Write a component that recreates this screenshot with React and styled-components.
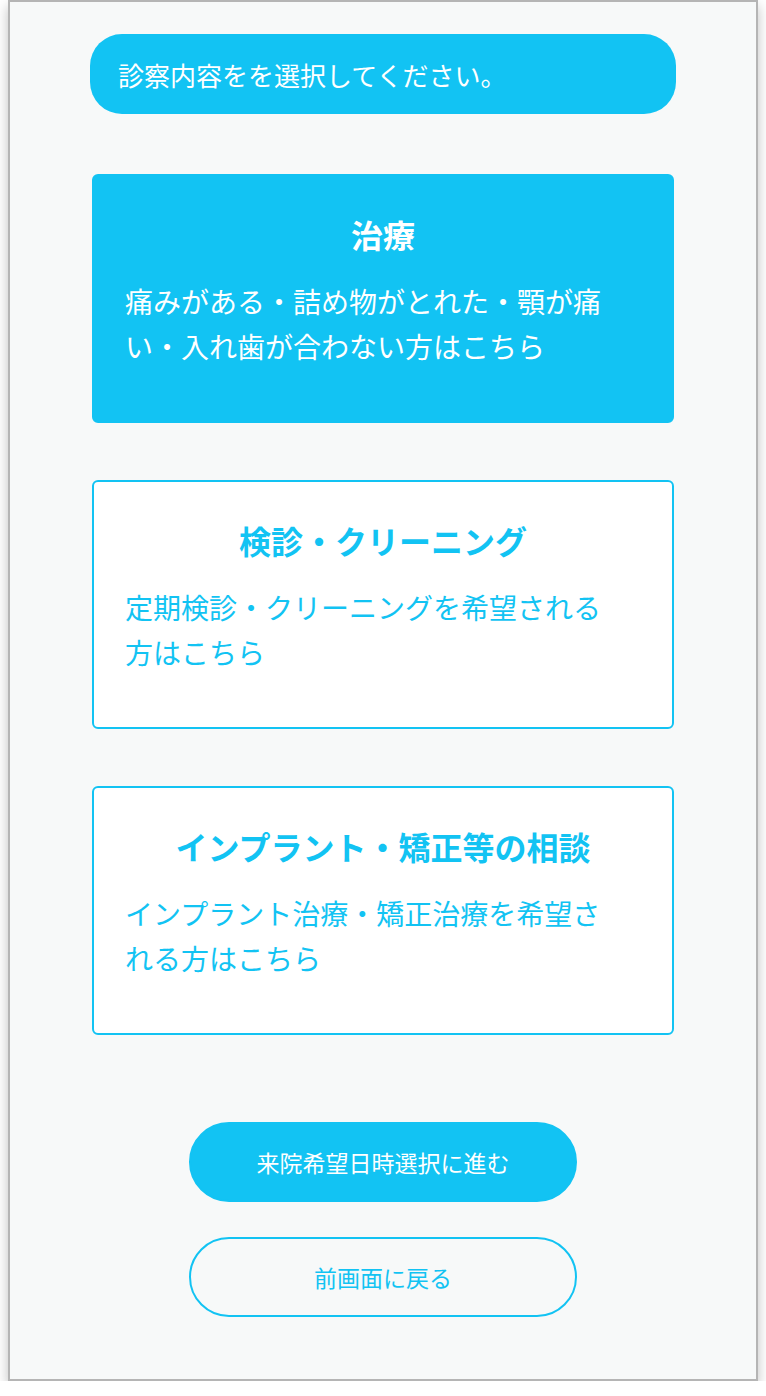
import React from 'react';
import styled, { createGlobalStyle } from 'styled-components';

const GlobalStyle = createGlobalStyle`
  body {
    margin: 0;
    background: #ffffff;
    font-family: "Noto Sans CJK JP", "Noto Sans", sans-serif;
  }
`

const BLUE = '#12c3f3';

let Frame = styled.div`
  box-sizing: border-box;
  width: 750px;
  height: 1381px;
  margin: 0 8px;
  border: 2px solid #b5b5b5;
  background: #f7f9f9;
  box-shadow: 0 6px 12px rgba(0, 0, 0, 0.25);
  display: flex;
  flex-direction: column;
  align-items: center;
  padding-top: 32px;
`

let Heading = styled.div`
  box-sizing: border-box;
  width: 586px;
  height: 80px;
  border-radius: 32px;
  background: ${BLUE};
  color: #fff;
  font-size: 26px;
  display: flex;
  align-items: center;
  padding-left: 28px;
  margin-bottom: 60px;
`

let CardList = styled.div`
  display: flex;
  flex-direction: column;
  gap: 57px;
  margin-bottom: 87px;
`

let Card = styled.div`
  box-sizing: border-box;
  width: 582px;
  height: 249px;
  border: 2px solid ${BLUE};
  border-radius: 6px;
  background: ${p => (p.$active ? BLUE : '#fff')};
  color: ${p => (p.$active ? '#fff' : BLUE)};
  padding: 34px 31px 0;
`

let CardTitle = styled.h2`
  margin: 0 0 21px;
  font-size: 32px;
  line-height: 48px;
  font-weight: 700;
  text-align: center;
`

let CardText = styled.p`
  margin: 0;
  max-width: 490px;
  font-size: 28px;
  line-height: 45px;
`

let Buttons = styled.div`
  display: flex;
  flex-direction: column;
  gap: 35px;
`

let Button = styled.button`
  box-sizing: border-box;
  width: 388px;
  height: 80px;
  border-radius: 40px;
  border: 2px solid ${BLUE};
  background: ${p => (p.$primary ? BLUE : 'transparent')};
  color: ${p => (p.$primary ? '#fff' : BLUE)};
  font-family: inherit;
  font-size: 23px;
  cursor: pointer;
`

const items = [
  { title: '治療', text: '痛みがある・詰め物がとれた・顎が痛い・入れ歯が合わない方はこちら', active: true },
  { title: '検診・クリーニング', text: '定期検診・クリーニングを希望される方はこちら' },
  { title: 'インプラント・矯正等の相談', text: 'インプラント治療・矯正治療を希望される方はこちら' },
]

const App = () => {
  return (
    <>
      <GlobalStyle />
      <Frame>
        <Heading>診察内容をを選択してください。</Heading>
        <CardList>
          {items.map(item => (
            <Card key={item.title} $active={item.active}>
              <CardTitle>{item.title}</CardTitle>
              <CardText>{item.text}</CardText>
            </Card>
          ))}
        </CardList>
        <Buttons>
          <Button $primary>来院希望日時選択に進む</Button>
          <Button>前画面に戻る</Button>
        </Buttons>
      </Frame>
    </>
  )
}
export default App;
